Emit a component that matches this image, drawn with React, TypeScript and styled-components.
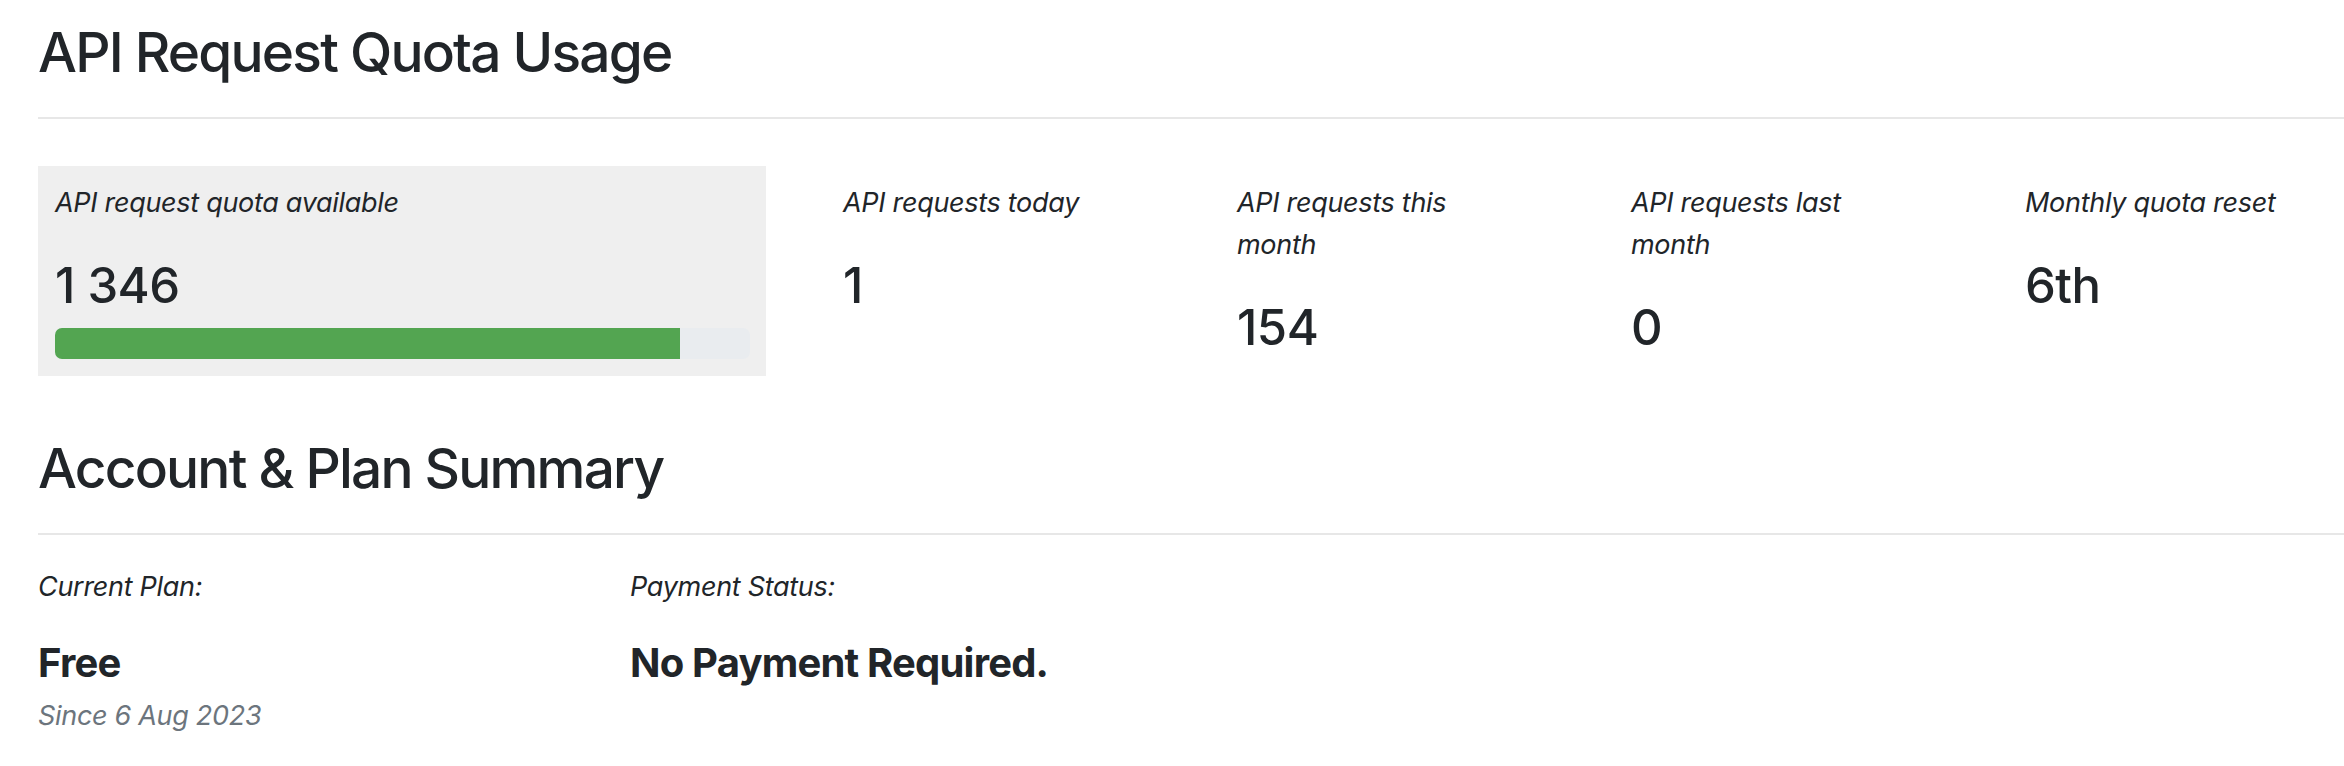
import React from "react";
import styled, { createGlobalStyle } from "styled-components";

const GlobalStyle = createGlobalStyle`
  html, body {
    margin: 0;
    padding: 0;
    background: #ffffff;
  }
  body {
    font-family: Inter, "Noto Sans", "Liberation Sans", sans-serif;
    color: #212529;
    -webkit-font-smoothing: antialiased;
  }
`;

const Page = styled.div`
  width: 2344px;
  padding: 19px 0 0 38px;
  box-sizing: border-box;
  overflow: hidden;
`;

const SectionTitle = styled.h2`
  margin: 0;
  font-size: 55px;
  line-height: 67px;
  font-weight: 500;
  letter-spacing: -1.8px;
  padding-bottom: 31px;
  border-bottom: 2px solid #e7e7e7;
`;

const StatsRow = styled.div`
  display: grid;
  grid-template-columns: 728px repeat(4, 334px);
  column-gap: 60px;
  align-items: start;
  margin-top: 47px;
  margin-bottom: 59px;
`;

const StatCard = styled.div<{ $highlight?: boolean }>`
  padding: 16px ${(p) => (p.$highlight ? "16px" : "50px")} 17px 17px;
  background: ${(p) => (p.$highlight ? "#efefef" : "transparent")};
`;

const Label = styled.div<{ $muted?: boolean }>`
  font-size: 27px;
  line-height: 42px;
  font-style: italic;
  letter-spacing: -0.3px;
  color: ${(p) => (p.$muted ? "#6c757d" : "#212529")};
`;

const StatValue = styled.div`
  margin-top: 32px;
  font-size: 49px;
  line-height: 59px;
  font-weight: 500;
  letter-spacing: -0.5px;
`;

const Track = styled.div`
  margin-top: 13px;
  height: 31px;
  border-radius: 7px;
  background: #e9ecef;
  overflow: hidden;
`;

const Fill = styled.div`
  height: 100%;
  background: #53a551;
`;

const SummaryRow = styled.div`
  display: grid;
  grid-template-columns: 592px 592px;
  margin-top: 31px;
`;

const SummaryItem = styled.div`
  display: flex;
  flex-direction: column;
`;

const SummaryValue = styled.div`
  margin-top: 31px;
  margin-bottom: 8px;
  font-size: 40px;
  line-height: 48px;
  font-weight: 700;
  letter-spacing: -0.8px;
`;

type Stat = { label: string; value: string; highlight?: boolean; percent?: number };

const stats: Stat[] = [
  { label: "API request quota available", value: "1 346", highlight: true, percent: 89.94 },
  { label: "API requests today", value: "1" },
  { label: "API requests this month", value: "154" },
  { label: "API requests last month", value: "0" },
  { label: "Monthly quota reset", value: "6th" },
];

export default function App() {
  return (
    <>
      <GlobalStyle />
      <Page>
        <SectionTitle>API Request Quota Usage</SectionTitle>
        <StatsRow>
          {stats.map((s) => (
            <StatCard key={s.label} $highlight={s.highlight}>
              <Label>{s.label}</Label>
              <StatValue>{s.value}</StatValue>
              {s.percent !== undefined && (
                <Track>
                  <Fill style={{ width: `${s.percent}%` }} />
                </Track>
              )}
            </StatCard>
          ))}
        </StatsRow>
        <SectionTitle>Account &amp; Plan Summary</SectionTitle>
        <SummaryRow>
          <SummaryItem>
            <Label>Current Plan:</Label>
            <SummaryValue>Free</SummaryValue>
            <Label $muted>Since 6 Aug 2023</Label>
          </SummaryItem>
          <SummaryItem>
            <Label>Payment Status:</Label>
            <SummaryValue>No Payment Required.</SummaryValue>
          </SummaryItem>
        </SummaryRow>
      </Page>
    </>
  );
}
